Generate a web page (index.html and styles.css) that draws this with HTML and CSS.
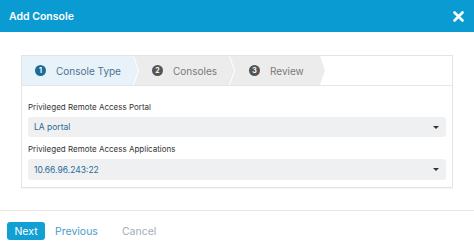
FILE: index.html
```html
<!DOCTYPE html>
<html>
<head>
<meta charset="utf-8">
<link rel="stylesheet" href="styles.css">
</head>
<body>
<div class="dialog">
  <header class="header">
    <span class="title">Add Console</span>
    <svg class="close" width="11" height="11" viewBox="0 0 11 11"><path d="M1.5 1.5 L9.5 9.5 M9.5 1.5 L1.5 9.5" stroke="#fff" stroke-width="2.6" stroke-linecap="round"/></svg>
  </header>
  <main class="body">
    <section class="panel">
      <div class="steps">
        <div class="step step-1 active"><span class="num">1</span><span class="label">Console Type</span></div>
        <div class="step step-2"><span class="num">2</span><span class="label">Consoles</span></div>
        <div class="step step-3"><span class="num">3</span><span class="label">Review</span></div>
      </div>
      <div class="form">
        <label class="field-label">Privileged Remote Access Portal</label>
        <div class="select"><span>LA portal</span><span class="caret"></span></div>
        <label class="field-label">Privileged Remote Access Applications</label>
        <div class="select tall"><span>10.66.96.243:22</span><span class="caret"></span></div>
      </div>
    </section>
  </main>
  <footer class="footer">
    <button class="btn primary">Next</button>
    <button class="btn link">Previous</button>
    <button class="btn muted">Cancel</button>
  </footer>
</div>
</body>
</html>
```
FILE: styles.css
```css
* { box-sizing: border-box; }
html, body { margin: 0; padding: 0; background: #fff; }
body { font-family: Inter, "Noto Sans", sans-serif; width: 474px; height: 246px; overflow: hidden; }

.header {
  height: 32px;
  background: #0a9bd2;
  display: flex;
  align-items: center;
  justify-content: space-between;
  padding: 0 9px 0 9px;
}
.title { color: #fff; font-weight: 600; font-size: 10.5px; margin-top: 1px; }
.close { margin-right: 1px; margin-top: 1px; }

.body { padding: 23px 21px 0 21px; }
.panel {
  border: 1px solid #e4e4e4;
  width: 432px;
  height: 133px;
  box-shadow: 0 1px 1px rgba(0,0,0,0.04);
}
.steps {
  height: 30px;
  display: flex;
  border-bottom: 1px solid #e6e6e6;
}
.step {
  height: 29px;
  display: flex;
  align-items: center;
  background: #ececec;
  clip-path: polygon(0 0, calc(100% - 5px) 0, 100% 50%, calc(100% - 5px) 100%, 0 100%, 5px 50%);
  font-size: 10px;
  color: #7a7a7a;
}
.step-1 { width: 116px; padding-left: 13px; background: #e8f2f9; clip-path: polygon(0 0, calc(100% - 5px) 0, 100% 50%, calc(100% - 5px) 100%, 0 100%); color: #4d7390; }
.step-2 { width: 100px; margin-left: -4px; padding-left: 18px; }
.step-3 { width: 95px; margin-left: -4px; padding-left: 19px; }
.num {
  width: 11px; height: 11px; border-radius: 50%;
  background: #555;
  color: #fff; font-size: 7px; font-weight: 700;
  display: inline-flex; align-items: center; justify-content: center;
  margin-right: 10px;
}
.active .num { background: #1c6c98; }

.form { padding: 16px 6px 0 6px; display: flex; flex-direction: column; }
.field-label { font-size: 8px; color: #333; line-height: 11px; margin-bottom: 4px; }
.select {
  height: 20px;
  background: #eef0f2;
  border-radius: 3px;
  display: flex; align-items: center; justify-content: space-between;
  padding: 0 7px 0 6px;
  font-size: 8.5px; color: #2d6a96;
  margin-bottom: 7px;
}
.select.tall { height: 21px; }
.caret { width: 0; height: 0; border-left: 3px solid transparent; border-right: 3px solid transparent; border-top: 3px solid #333; }

.footer {
  margin-top: 22px;
  border-top: 1px solid #e8e8e8;
  padding: 11px 7px 0 7px;
  display: flex; align-items: center;
}
.btn { font-family: inherit; font-size: 10.5px; border: none; background: none; padding: 0; cursor: pointer; }
.primary { background: #129fd4; color: #fff; width: 38px; height: 18px; border-radius: 3px; }
.link { color: #4a9ccc; margin-left: 10px; }
.muted { color: #a3adb8; margin-left: 24px; }
```
